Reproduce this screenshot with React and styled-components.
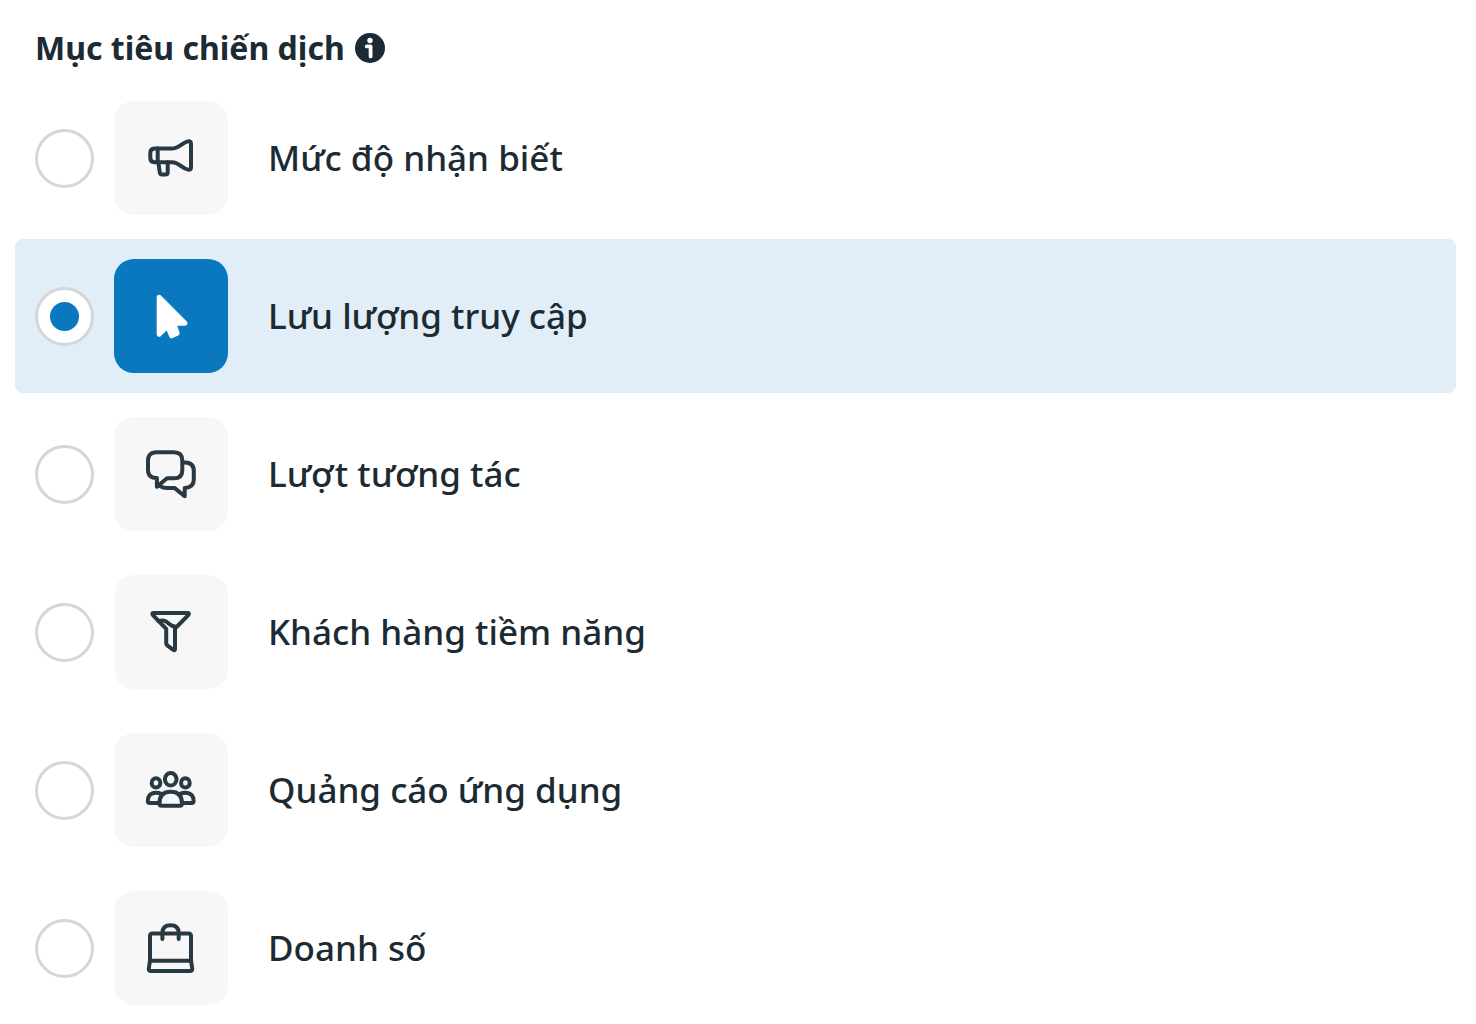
import { useState } from "react";
import styled, { createGlobalStyle } from "styled-components";

const GlobalStyle = createGlobalStyle`
  * {
    box-sizing: border-box;
  }

  body {
    margin: 0;
    background: #ffffff;
    color: #1c2b33;
    font-family: "Noto Sans", "Open Sans", sans-serif;
  }
`;

const Fieldset = styled.fieldset`
  border: none;
  margin: 0;
  padding: 28px 20px 0 15px;
  min-width: 0;
`;

const Legend = styled.legend`
  float: left;
  display: flex;
  align-items: center;
  gap: 10px;
  width: 100%;
  padding: 0 20px;
  margin-bottom: 13px;
  font-size: 32px;
  line-height: 40px;
  font-weight: 700;
`;

const InfoButton = styled.button`
  display: flex;
  padding: 0;
  border: none;
  background: none;
  color: inherit;
  cursor: pointer;

  svg {
    width: 30px;
    height: 30px;
  }
`;

const OptionList = styled.div`
  clear: both;
  display: flex;
  flex-direction: column;
  gap: 4px;
`;

const Option = styled.label`
  display: flex;
  align-items: center;
  padding: 20px;
  border-radius: 8px;
  background: ${(props) => (props.$selected ? "#e1edf7" : "transparent")};
  cursor: pointer;
`;

const Radio = styled.input`
  appearance: none;
  flex: none;
  display: flex;
  align-items: center;
  justify-content: center;
  width: 59px;
  height: 59px;
  margin: 0 20px 0 0;
  border: 3px solid #d0d7dd;
  border-radius: 50%;
  background: #ffffff;
  cursor: pointer;

  &:checked::before {
    content: "";
    width: 29px;
    height: 29px;
    border-radius: 50%;
    background: #0a78be;
  }
`;

const IconTile = styled.span`
  flex: none;
  display: flex;
  align-items: center;
  justify-content: center;
  width: 114px;
  height: 114px;
  margin-right: 40px;
  border-radius: 20px;
  background: ${(props) => (props.$selected ? "#0a78be" : "#f7f7f7")};
  color: ${(props) => (props.$selected ? "#ffffff" : "#283943")};
`;

const Icon = styled.svg`
  width: 60px;
  height: 60px;
  fill: none;
  stroke: currentColor;
  stroke-width: 4;
  stroke-linecap: round;
  stroke-linejoin: round;
`;

const OptionName = styled.span`
  font-size: 35px;
  line-height: 48px;
  font-weight: 500;
`;

const InfoIcon = () => (
  <svg viewBox="0 0 30 30" aria-hidden="true">
    <circle cx="15" cy="15" r="15" fill="currentColor" />
    <circle cx="15" cy="7.5" r="2.7" fill="#ffffff" />
    <path
      d="M11.8 13.4H15.6V23.4"
      fill="none"
      stroke="#ffffff"
      strokeWidth="3.8"
      strokeLinecap="round"
      strokeLinejoin="round"
    />
  </svg>
);

const MegaphoneIcon = () => (
  <Icon viewBox="0 0 60 60" aria-hidden="true">
    <path d="M13.5 20.5H31C38 20.5 41 14.5 47 13.4C49 13 50 13.7 50 15.5V39.5C50 41.3 49 42 47 41.6C41 40.5 38 34.2 31 34.2H13.5C10.6 34.2 9.3 32.5 9.3 29.8V25C9.3 22.2 10.6 20.5 13.5 20.5Z" />
    <path d="M16.7 20.5V34.2" />
    <path d="M17.3 34.2L18.8 44.5C19 46 19.6 46.5 21 46.5H24.5C26 46.5 26.7 45.8 26.7 44.3V34.2" />
  </Icon>
);

const CursorIcon = () => (
  <Icon viewBox="0 0 60 60" aria-hidden="true">
    <path
      d="M18.2 11.2L44 37.2H32.8L36.2 47.2L30.6 49.8L26.6 40.2L18.2 48.2Z"
      fill="currentColor"
      strokeWidth="5"
    />
  </Icon>
);

const ChatIcon = () => (
  <Icon viewBox="0 0 60 60" aria-hidden="true">
    <path d="M15.3 8.3H33C38.5 8.3 41.3 11.3 41.3 16.5V26C41.3 31.3 38.5 34.3 33 34.3H26L15.9 42.8V34C10 34 7 31.3 7 26V16.5C7 11.3 10 8.3 15.3 8.3Z" />
    <path d="M42.5 18.5H44C49.8 18.5 52.8 21.5 52.8 27V35.5C52.8 41 49.5 43.6 43.7 44V52.2L33.8 44.1H26C22.5 44.1 20 43 17.5 41" />
  </Icon>
);

const FunnelIcon = () => (
  <Icon viewBox="0 0 60 60" aria-hidden="true">
    <path d="M12.2 11H47C48 11 48.2 12 47.5 12.8L34 26.5V47C34 48.3 33.2 48.6 32.2 47.8L26.3 43.4C25.6 42.8 25.2 42.2 25.2 41.3V26.8L11.7 12.8C11 12 11.2 11 12.2 11Z" />
    <path d="M17.5 19.2C27 16.2 27 24.5 34 24.5" />
  </Icon>
);

const PeopleIcon = () => (
  <Icon viewBox="0 0 60 60" aria-hidden="true">
    <ellipse cx="29.7" cy="19.3" rx="5.8" ry="6.3" />
    <ellipse cx="15" cy="22.9" rx="4.3" ry="4.6" />
    <ellipse cx="44.4" cy="22.9" rx="4.3" ry="4.6" />
    <path d="M18.4 43.5C18.4 36 22 31.8 29.7 31.8C37.4 31.8 41 36 41 43.5C41 45 40.3 45.7 38.8 45.7H20.6C19.1 45.7 18.4 45 18.4 43.5Z" />
    <path d="M20 33.8C18.6 33 17 32.7 15 32.7C9.5 32.7 6.8 36 6.8 41C6.8 42.5 7.5 43 8.8 43H18.4" />
    <path d="M39.4 33.8C40.8 33 42.4 32.7 44.4 32.7C49.9 32.7 52.6 36 52.6 41C52.6 42.5 51.9 43 50.6 43H41" />
  </Icon>
);

const BagIcon = () => (
  <Icon viewBox="0 0 60 60" aria-hidden="true">
    <path d="M11.5 15.5H47.5C49.2 15.5 50 16.3 50 18V42.5L51.2 50.5C51.4 52.2 50.8 53 49 53H10C8.2 53 7.6 52.2 7.8 50.5L9 42.5V18C9 16.3 9.8 15.5 11.5 15.5Z" />
    <path d="M9.5 42.7H49.5" />
    <path d="M21.4 21V15C21.4 9.8 24.5 7.2 29.5 7.2C34.5 7.2 37.7 9.8 37.7 15V21" />
  </Icon>
);

const objectives = [
  { id: "awareness", name: "Mức độ nhận biết", Glyph: MegaphoneIcon },
  { id: "traffic", name: "Lưu lượng truy cập", Glyph: CursorIcon },
  { id: "engagement", name: "Lượt tương tác", Glyph: ChatIcon },
  { id: "leads", name: "Khách hàng tiềm năng", Glyph: FunnelIcon },
  { id: "app", name: "Quảng cáo ứng dụng", Glyph: PeopleIcon },
  { id: "sales", name: "Doanh số", Glyph: BagIcon },
];

const App = () => {
  const [selected, setSelected] = useState("traffic");

  return (
    <>
      <GlobalStyle />
      <Fieldset>
        <Legend>
          Mục tiêu chiến dịch
          <InfoButton type="button" aria-label="Mục tiêu chiến dịch">
            <InfoIcon />
          </InfoButton>
        </Legend>
        <OptionList>
          {objectives.map(({ id, name, Glyph }) => (
            <Option key={id} htmlFor={id} $selected={selected === id}>
              <Radio
                type="radio"
                id={id}
                name="objective"
                value={id}
                checked={selected === id}
                onChange={() => setSelected(id)}
              />
              <IconTile $selected={selected === id}>
                <Glyph />
              </IconTile>
              <OptionName>{name}</OptionName>
            </Option>
          ))}
        </OptionList>
      </Fieldset>
    </>
  );
};

export default App;
